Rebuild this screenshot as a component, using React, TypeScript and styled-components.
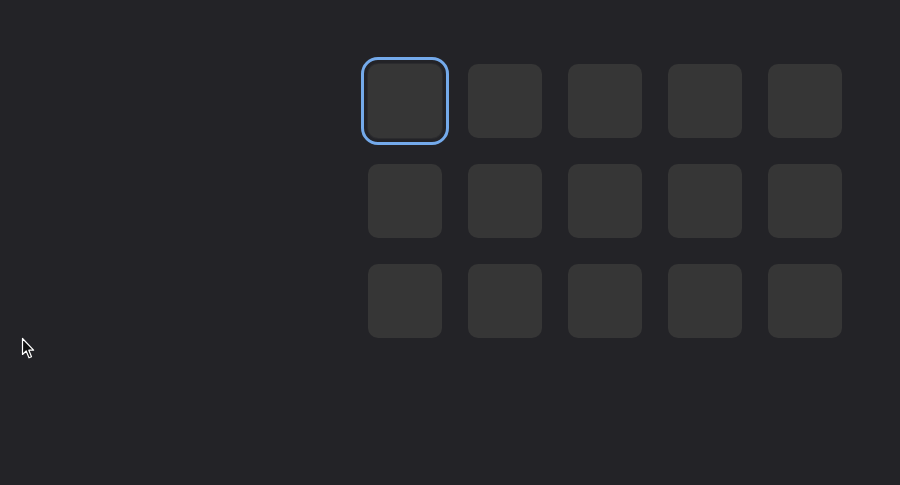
import React from "react";
import styled, { createGlobalStyle } from "styled-components";

const Global = createGlobalStyle`
  html, body {
    margin: 0;
    padding: 0;
    background: #232327;
    font-family: "Liberation Sans", Arial, sans-serif;
  }
`;

const Page = styled.main`
  position: relative;
  width: 900px;
  height: 485px;
  box-sizing: border-box;
  padding: 64px 0 0 368px;
  background: #232327;
  overflow: hidden;
`;

const Grid = styled.div`
  display: grid;
  grid-template-columns: repeat(5, 74px);
  grid-auto-rows: 74px;
  gap: 26px;
`;

const Tile = styled.button<{ $focused?: boolean }>`
  width: 74px;
  height: 74px;
  padding: 0;
  border: none;
  border-radius: 10px;
  background: #363636;
  box-shadow: ${(p) => (p.$focused ? "0 0 0 1px #2b2b2e" : "none")};
  outline: ${(p) => (p.$focused ? "3px solid #74aaeb" : "none")};
  outline-offset: 4px;
  cursor: pointer;
`;

const Cursor = styled.svg`
  position: absolute;
  left: 21px;
  top: 337px;
  width: 15px;
  height: 24px;
  pointer-events: none;
`;

export default function App() {
  const tiles = Array.from({ length: 15 }, (_, i) => i);
  return (
    <>
      <Global />
      <Page>
        <Grid>
          {tiles.map((i) => (
            <Tile key={i} $focused={i === 0} aria-label={`Tile ${i + 1}`} />
          ))}
        </Grid>
        <Cursor viewBox="0 0 15 24">
          <path
            d="M1.5 1.5 L1.5 17.5 L5.2 14 L8 20.8 L10.5 19.8 L7.8 13.2 L12.6 13.2 Z"
            fill="#111"
            stroke="#fff"
            strokeWidth="1.2"
            strokeLinejoin="round"
          />
        </Cursor>
      </Page>
    </>
  );
}
